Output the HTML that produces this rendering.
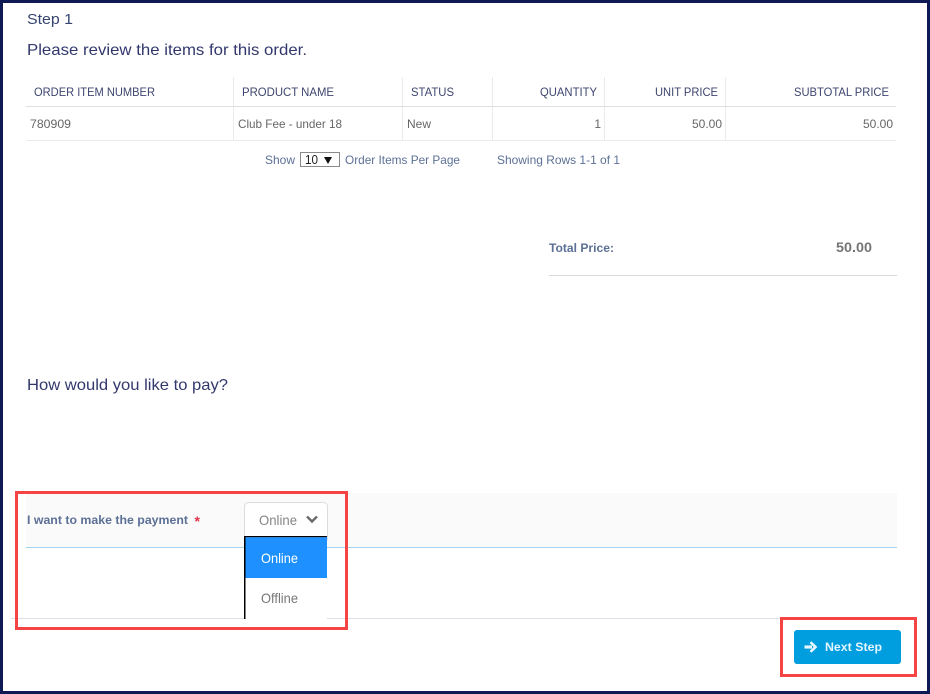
<!DOCTYPE html>
<html><head><meta charset="utf-8"><style>
html,body{margin:0;padding:0;background:#fff;width:930px;height:694px;overflow:hidden}
svg{display:block}
text{font-family:"Liberation Sans",sans-serif}
</style></head><body>
<svg width="930" height="694" viewBox="0 0 930 694" xmlns="http://www.w3.org/2000/svg">
<rect width="930" height="694" fill="#0f1a55"/>
<rect x="3" y="3" width="924" height="688" fill="#fff"/>

<text x="27" y="24" font-size="15" fill="#36456f" textLength="46" lengthAdjust="spacingAndGlyphs">Step 1</text>
<text x="27" y="55" font-size="16" fill="#32386c" textLength="280" lengthAdjust="spacingAndGlyphs">Please review the items for this order.</text>

<g fill="#ebebeb">
<rect x="233" y="77" width="1" height="63"/>
<rect x="402" y="77" width="1" height="63"/>
<rect x="492" y="77" width="1" height="63"/>
<rect x="604" y="77" width="1" height="63"/>
<rect x="725" y="77" width="1" height="63"/>
<rect x="26" y="140" width="870" height="1"/>
</g>
<rect x="26" y="106" width="870" height="1" fill="#dfdfdf"/>

<g font-size="12" fill="#3e4670">
<text x="34" y="96" textLength="121" lengthAdjust="spacingAndGlyphs">ORDER ITEM NUMBER</text>
<text x="242" y="96" textLength="92" lengthAdjust="spacingAndGlyphs">PRODUCT NAME</text>
<text x="411" y="96" textLength="43" lengthAdjust="spacingAndGlyphs">STATUS</text>
<text x="540" y="96" textLength="57" lengthAdjust="spacingAndGlyphs">QUANTITY</text>
<text x="655" y="96" textLength="63" lengthAdjust="spacingAndGlyphs">UNIT PRICE</text>
<text x="794" y="96" textLength="95" lengthAdjust="spacingAndGlyphs">SUBTOTAL PRICE</text>
</g>
<g font-size="12" fill="#666">
<text x="30" y="128" textLength="41" lengthAdjust="spacingAndGlyphs">780909</text>
<text x="238" y="128" textLength="104" lengthAdjust="spacingAndGlyphs">Club Fee - under 18</text>
<text x="407" y="128" textLength="24" lengthAdjust="spacingAndGlyphs">New</text>
<text x="601" y="128" text-anchor="end">1</text>
<text x="722" y="128" text-anchor="end">50.00</text>
<text x="893" y="128" text-anchor="end">50.00</text>
</g>

<g font-size="12" fill="#5c7096">
<text x="265" y="164" textLength="30" lengthAdjust="spacingAndGlyphs">Show</text>
<text x="345" y="164" textLength="115" lengthAdjust="spacingAndGlyphs">Order Items Per Page</text>
<text x="497" y="164" textLength="123" lengthAdjust="spacingAndGlyphs">Showing Rows 1-1 of 1</text>
</g>
<rect x="300.5" y="152.5" width="39" height="14" fill="#fff" stroke="#8a8a8a" stroke-width="1"/>
<text x="305" y="164" font-size="13" fill="#222" textLength="13" lengthAdjust="spacingAndGlyphs">10</text>
<path d="M324 157h8l-4 7z" fill="#111"/>

<text x="549" y="252" font-size="12" font-weight="bold" fill="#5c7096" textLength="65" lengthAdjust="spacingAndGlyphs">Total Price:</text>
<text x="836" y="252" font-size="14" font-weight="bold" fill="#757575" textLength="36" lengthAdjust="spacingAndGlyphs">50.00</text>
<rect x="549" y="275" width="348" height="1" fill="#d9d9d9"/>

<text x="27" y="390" font-size="16" fill="#32386c" textLength="201" lengthAdjust="spacingAndGlyphs">How would you like to pay?</text>

<rect x="26" y="493" width="871" height="54" fill="#fafafa"/>
<rect x="26" y="547" width="871" height="1" fill="#a5d5ee"/>
<rect x="11" y="618" width="769" height="1" fill="#dcdfe8"/>

<text x="27" y="524" font-size="12" font-weight="bold" fill="#5c7096" textLength="161" lengthAdjust="spacingAndGlyphs">I want to make the payment</text>
<text x="194.5" y="526" font-size="14" font-weight="bold" fill="#e0304a">*</text>

<rect x="244.5" y="502.5" width="83" height="40" rx="4" fill="#fff" stroke="#dcdcdc"/>
<text x="259" y="525" font-size="14" fill="#858585" textLength="38" lengthAdjust="spacingAndGlyphs">Online</text>
<path d="M307 516.5l5 5 5-5" fill="none" stroke="#6b6b6b" stroke-width="2.4"/>

<rect x="244" y="536" width="83" height="83" fill="#fff"/>
<rect x="244" y="536" width="1.5" height="83" fill="#000"/>
<rect x="244" y="536" width="83" height="1.3" fill="#000"/>
<rect x="245.5" y="537.3" width="81.5" height="40.7" fill="#1e90ff"/>
<text x="261" y="563" font-size="14" fill="#fff" textLength="37" lengthAdjust="spacingAndGlyphs">Online</text>
<text x="261" y="603" font-size="14" fill="#777" textLength="37" lengthAdjust="spacingAndGlyphs">Offline</text>

<rect x="16.5" y="492.5" width="330" height="136" fill="none" stroke="#f44444" stroke-width="3"/>
<rect x="781.5" y="618.5" width="134" height="57" fill="none" stroke="#f44444" stroke-width="3"/>

<rect x="794" y="630" width="107" height="34" rx="3" fill="#009ddf"/>
<path d="M804.5 645.4h7.5v3.2h-7.5z" fill="#e8f7ff"/>
<path d="M810.5 642.2l5 4.8-5 4.8" fill="none" stroke="#e8f7ff" stroke-width="2.6"/>
<text x="825" y="651" font-size="12" font-weight="bold" fill="#e3f5ff" textLength="57" lengthAdjust="spacingAndGlyphs">Next Step</text>
</svg>
</body></html>
